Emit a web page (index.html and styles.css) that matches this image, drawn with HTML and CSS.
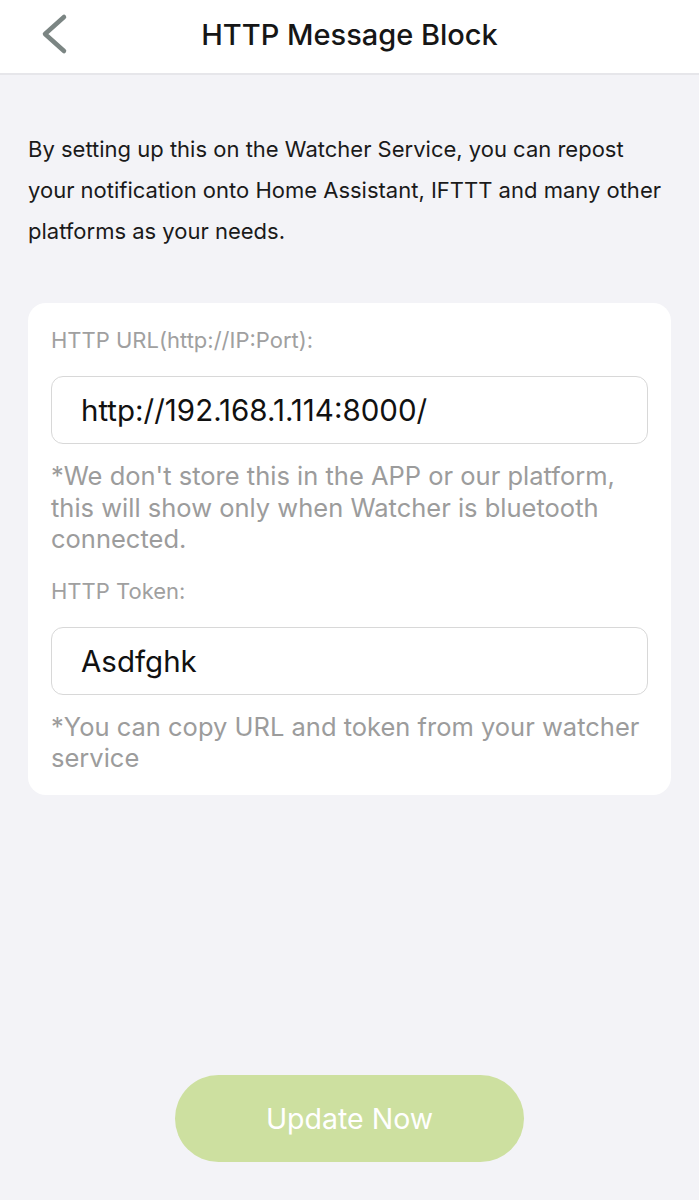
FILE: index.html
```html
<!DOCTYPE html>
<html lang="en">
<head>
    <meta charset="UTF-8">
    <meta name="viewport" content="width=device-width, initial-scale=1.0">
    <title>HTTP Message Block</title>
    <link rel="stylesheet" href="styles.css">
</head>
<body>
    <div class="page">
        <header class="topbar">
            <button class="back" aria-label="Back">
                <svg width="30" height="44" viewBox="0 0 30 44">
                    <path d="M24 5 L5 22 L24 39" fill="none" stroke="#7b8583" stroke-width="4.5" stroke-linecap="round" stroke-linejoin="round"/>
                </svg>
            </button>
            <h1>HTTP Message Block</h1>
        </header>

        <main class="content">
            <p class="intro">By setting up this on the Watcher Service, you can repost your notification onto Home Assistant, IFTTT and many other platforms as your needs.</p>

            <div class="card">
                <label class="label">HTTP URL(http://IP:Port):</label>
                <div class="field">http://192.168.1.114:8000/</div>
                <p class="note">*We don't store this in the APP or our platform, this will show only when Watcher is bluetooth connected.</p>

                <label class="label">HTTP Token:</label>
                <div class="field">Asdfghk</div>
                <p class="note">*You can copy URL and token from your watcher service</p>
            </div>
        </main>

        <div class="footer">
            <button class="update">Update Now</button>
        </div>
    </div>
</body>
</html>
```

FILE: styles.css
```css
html, body {
    margin: 0;
    padding: 0;
}

body {
    font-family: Inter, Roboto, sans-serif;
    background-color: #f3f3f7;
    color: #1a1a1a;
}

.page {
    display: flex;
    flex-direction: column;
    min-height: 1200px;
}

.topbar {
    position: relative;
    height: 75px;
    background-color: #ffffff;
    border-bottom: 2px solid #e6e6ea;
    display: flex;
    align-items: center;
    justify-content: center;
    box-sizing: border-box;
}

.topbar h1 {
    margin: 0;
    font-size: 29px;
    font-weight: 500;
    color: #161616;
    padding-bottom: 4px;
}

.back {
    position: absolute;
    left: 40px;
    top: 12px;
    padding: 0;
    border: none;
    background: none;
    cursor: pointer;
}

.back svg {
    display: block;
}

.content {
    padding: 54px 28px 0;
}

.intro {
    margin: 0;
    font-size: 22px;
    line-height: 41px;
    color: #1a1a1a;
}

.card {
    margin-top: 51px;
    background-color: #ffffff;
    border-radius: 18px;
    padding: 21px 23px 21px;
    display: flex;
    flex-direction: column;
}

.label {
    font-size: 22px;
    line-height: 32px;
    color: #a0a0a0;
}

.field {
    margin-top: 20px;
    height: 68px;
    border: 1px solid #d8d8d8;
    border-radius: 12px;
    box-sizing: border-box;
    padding: 0 29px;
    display: flex;
    align-items: center;
    font-size: 29.5px;
    color: #111111;
}

.note {
    margin: 16px 0 20px;
    font-size: 25.5px;
    line-height: 31.5px;
    color: #9c9c9c;
}

.card .note:last-child {
    margin-bottom: 0;
}

.footer {
    margin-top: auto;
    display: flex;
    justify-content: center;
    padding-bottom: 38px;
}

.update {
    width: 349px;
    height: 87px;
    border: none;
    border-radius: 44px;
    background-color: #cde0a0;
    color: #ffffff;
    font-family: Inter, Roboto, sans-serif;
    font-size: 28.5px;
    cursor: pointer;
}
```
